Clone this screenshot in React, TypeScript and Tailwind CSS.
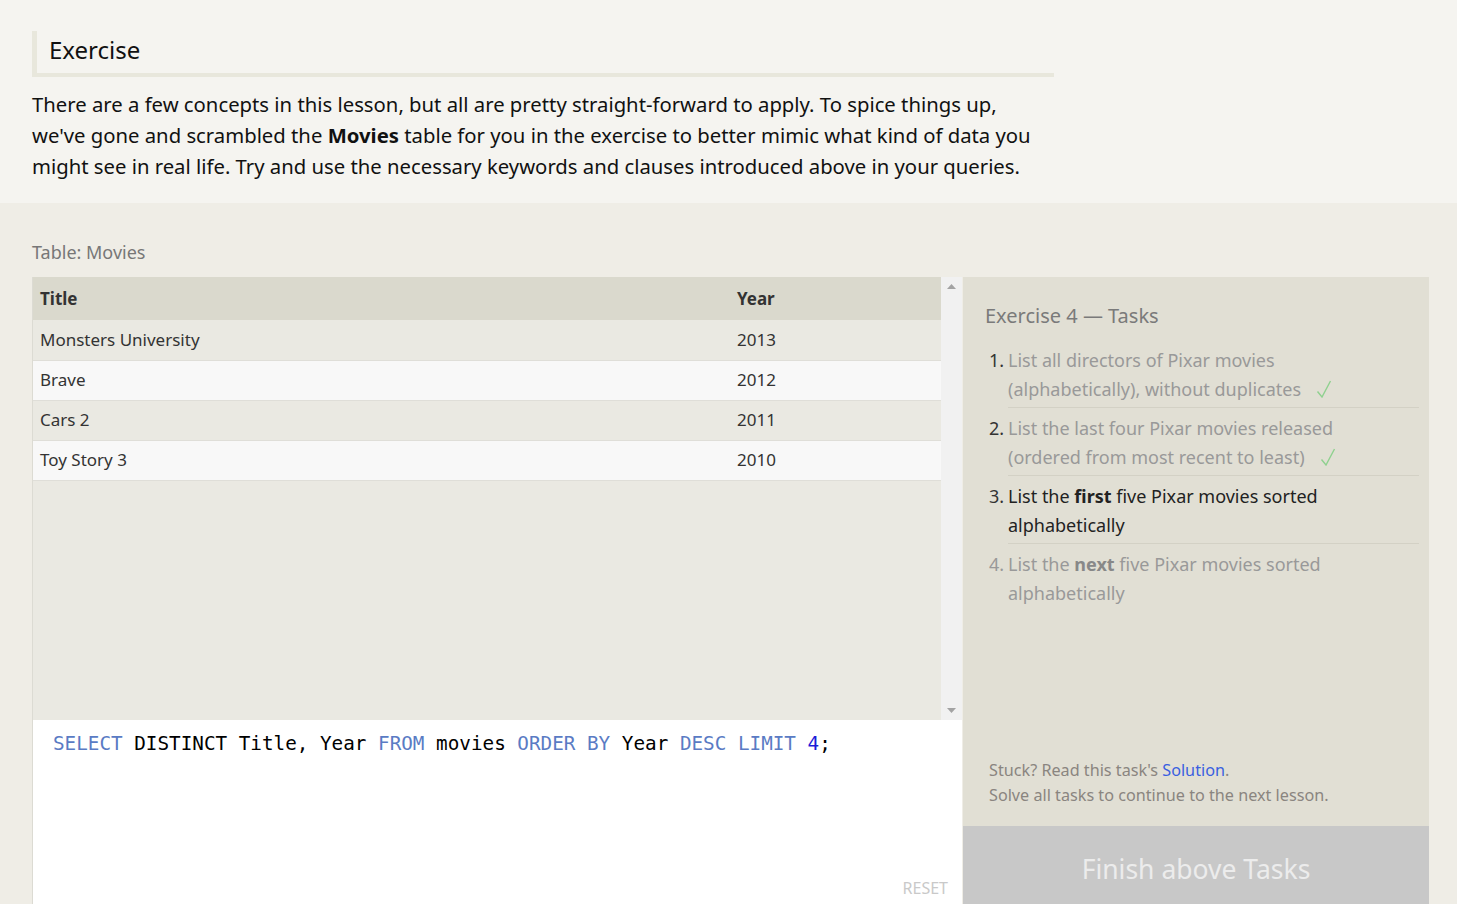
import React from "react";

const movies = [
    {title: "Monsters University", year: 2013},
    {title: "Brave", year: 2012},
    {title: "Cars 2", year: 2011},
    {title: "Toy Story 3", year: 2010},
];

function Check() {
    return (
        <svg className="inline-block ml-[15px] align-[-2px]" width="16" height="18" viewBox="0 0 16 18">
            <path d="M1.5 11.5L6 17L14.5 1" fill="none" stroke="#8fd18f" strokeWidth="1.4"/>
        </svg>
    );
}

function App() {
    return (
        <div className="min-h-screen bg-[#efede6] font-['Noto_Sans',sans-serif] text-[#111]">
            <div className="bg-[#f5f4f0] px-8 pt-[31px] pb-[21px]">
                <div className="w-[1022px] border-l-[5px] border-b-[4px] border-[#e8e7dc] pl-3 pt-[2px] pb-[6px]">
                    <h2 className="text-[24px] leading-[34px] text-[#111]">Exercise</h2>
                </div>
                <p className="mt-[12px] w-[1022px] text-[20.3px] leading-[31px]">
                    There are a few concepts in this lesson, but all are pretty straight-forward to apply. To spice things up,<br/>
                    we've gone and scrambled the <b>Movies</b> table for you in the exercise to better mimic what kind of data you<br/>
                    might see in real life. Try and use the necessary keywords and clauses introduced above in your queries.
                </p>
            </div>

            <div className="pt-[36px] pl-8">
                <div className="text-[18px] leading-[26px] text-[#777] mb-[12px]">Table: Movies</div>
                <div className="flex">
                    <div className="w-[930px] flex flex-col">
                        <div className="flex h-[443px] bg-[#eae9e2] border-l border-[#dcdbd3]">
                            <div className="flex-1">
                                <table className="w-full text-[17px] text-[#333]">
                                    <thead>
                                    <tr className="bg-[#dad9cd] h-[43px]">
                                        <th className="text-left font-bold pl-[7px]">Title</th>
                                        <th className="text-left font-bold w-[204px]">Year</th>
                                    </tr>
                                    </thead>
                                    <tbody>
                                    {movies.map((m, i) => (
                                        <tr key={m.title}
                                            className={(i % 2 === 0 ? "bg-[#eae9e2]" : "bg-[#f8f8f8]") + " h-[40px] border-b border-[#dfded8]"}>
                                            <td className="pl-[7px]">{m.title}</td>
                                            <td>{m.year}</td>
                                        </tr>
                                    ))}
                                    </tbody>
                                </table>
                            </div>
                            <div className="w-[21px] bg-[#f1f1f1] flex flex-col justify-between items-center py-[7px]">
                                <svg width="9" height="5" viewBox="0 0 9 5"><path d="M4.5 0L9 5H0z" fill="#a3a3a3"/></svg>
                                <svg width="9" height="5" viewBox="0 0 9 5"><path d="M0 0h9L4.5 5z" fill="#a3a3a3"/></svg>
                            </div>
                        </div>
                        <div className="relative h-[194px] bg-white pl-5 pt-[13px] border-l border-[#dcdbd3]">
                            <pre className="font-['DejaVu_Sans_Mono',monospace] text-[19.3px] leading-[22px] text-black">
                                <span className="text-[#5a7bc4]">SELECT</span> DISTINCT Title, Year <span className="text-[#5a7bc4]">FROM</span> movies <span className="text-[#5a7bc4]">ORDER BY</span> Year <span className="text-[#5a7bc4]">DESC LIMIT</span> <span className="text-[#1b1bd8]">4</span>;
                            </pre>
                            <span className="absolute right-[14px] top-[157px] text-[16px] leading-[22px] text-[#c9c9c9]">RESET</span>
                        </div>
                    </div>

                    <div className="w-[466px] ml-px bg-[#e1dfd4] flex flex-col">
                        <div className="flex-1 pl-[22px] pr-[10px] pt-[24px]">
                            <h3 className="text-[20px] leading-[30px] text-[#7a7a7a]">Exercise 4 — Tasks</h3>
                            <ol className="mt-[15px] text-[18px] leading-[28.5px]">
                                <li className="flex">
                                    <span className="w-[23px] text-right pr-[4px] text-[#333]">1.</span>
                                    <span className="flex-1 text-[#999] border-b border-[#d3d1c5] pb-[4px]">
                                        List all directors of Pixar movies<br/>(alphabetically), without duplicates<Check/>
                                    </span>
                                </li>
                                <li className="flex pt-[6px]">
                                    <span className="w-[23px] text-right pr-[4px] text-[#333]">2.</span>
                                    <span className="flex-1 text-[#999] border-b border-[#d3d1c5] pb-[4px]">
                                        List the last four Pixar movies released<br/>(ordered from most recent to least)<Check/>
                                    </span>
                                </li>
                                <li className="flex pt-[6px]">
                                    <span className="w-[23px] text-right pr-[4px] text-[#333]">3.</span>
                                    <span className="flex-1 text-[#222] border-b border-[#d3d1c5] pb-[4px]">
                                        List the <b>first</b> five Pixar movies sorted<br/>alphabetically
                                    </span>
                                </li>
                                <li className="flex pt-[6px] text-[#999]">
                                    <span className="w-[23px] text-right pr-[4px]">4.</span>
                                    <span className="flex-1">
                                        List the <b className="text-[#888]">next</b> five Pixar movies sorted<br/>alphabetically
                                    </span>
                                </li>
                            </ol>
                        </div>
                        <div className="pl-[26px] pb-[18px] text-[16.2px] leading-[25px] text-[#8a8580]">
                            <div>Stuck? Read this task's <a className="text-[#3a5fe0]">Solution</a>.</div>
                            <div>Solve all tasks to continue to the next lesson.</div>
                        </div>
                        <div className="h-[88px] bg-[#c8c8c8] flex items-center justify-center text-[26.5px] text-[#ececec]">
                            Finish above Tasks
                        </div>
                    </div>
                </div>
            </div>
        </div>
    );
}

export default App;
